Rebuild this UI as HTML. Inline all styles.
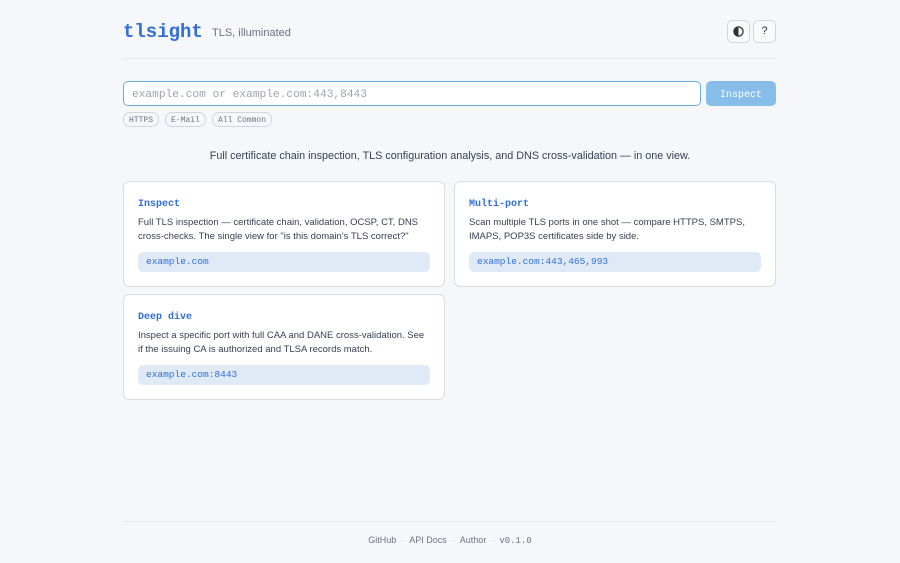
<!DOCTYPE html>
<html><head><meta charset="utf-8"><style>
*{box-sizing:border-box;margin:0;padding:0}
body{width:900px;height:563px;background:#f6f7fa;font-family:"Liberation Sans",sans-serif;color:#374151;position:relative;overflow:hidden}
.mono{font-family:"Liberation Mono",monospace}
.logo{position:absolute;left:123px;top:20px;font:bold 19px "Liberation Mono",monospace;line-height:24px;color:#2f6fd6}
.tag{position:absolute;left:212px;top:27px;font-size:11px;color:#6b7280}
.ib{position:absolute;top:20px;width:23px;height:23px;border:1px solid #d1d5db;border-radius:5px;background:#f8f9fb;font-size:11px;text-align:center;line-height:21px;color:#333}
.ib svg{position:absolute;left:5px;top:5px}
.hr{position:absolute;left:123px;width:653px;height:1px;background:#e5e7eb}
.inp{position:absolute;left:123px;top:81px;width:578px;height:25px;border:1.5px solid #6aaae0;border-radius:5px;background:#fff;font:11.2px "Liberation Mono",monospace;line-height:22px;color:#9ca3af;padding:2px 8px 0}
.btn{position:absolute;left:706px;top:81px;width:70px;height:25px;border-radius:5px;background:#86bde9;color:#fff;font:10px "Liberation Mono",monospace;line-height:25px;text-align:center;padding-top:2px}
.chip{position:absolute;top:112px;height:15px;border:1px solid #d1d5db;border-radius:7px;font:8px "Liberation Mono",monospace;line-height:13px;color:#6b7280;padding:1px 5px 0}
.lead{position:absolute;top:150px;left:0;width:900px;text-align:center;font-size:10.8px;color:#374151}
.card{position:absolute;width:322px;height:106px;background:#fff;border:1px solid #d9dde3;border-radius:6px;padding:0 14px}
.card h3{font:bold 10px "Liberation Mono",monospace;line-height:12px;color:#2f6fd6;margin-top:17px}
.card p{font-size:9.5px;line-height:13.5px;color:#374151;margin-top:5px}
.card .ex{position:absolute;left:14px;right:14px;bottom:14px;height:20px;background:#dfeaf6;border-radius:5px;font:9.5px "Liberation Mono",monospace;line-height:20px;color:#2f6fd6;padding:0 8px}
.foot{position:absolute;top:535px;left:0;width:900px;text-align:center;font-size:9px;color:#6b7280}
.foot span.d{color:#c4c8cf;margin:0 5px}
</style></head><body>
<div class="logo">tlsight</div>
<div class="tag">TLS, illuminated</div>
<div class="ib" style="left:727px"><svg width="11" height="11" viewBox="0 0 12 12"><circle cx="6" cy="6" r="5" fill="none" stroke="#333" stroke-width="1.4"/><path d="M6 1a5 5 0 0 0 0 10z" fill="#333"/></svg></div>
<div class="ib" style="left:753px">?</div>
<div class="hr" style="top:58px"></div>
<div class="inp">example.com or example.com:443,8443</div>
<div class="btn">Inspect</div>
<div class="chip" style="left:123px">HTTPS</div>
<div class="chip" style="left:165px">E-Mail</div>
<div class="chip" style="left:212px">All Common</div>
<div class="lead">Full certificate chain inspection, TLS configuration analysis, and DNS cross-validation — in one view.</div>
<div class="card" style="left:123px;top:181px"><h3>Inspect</h3><p>Full TLS inspection — certificate chain, validation, OCSP, CT, DNS cross-checks. The single view for "is this domain's TLS correct?"</p><div class="ex">example.com</div></div>
<div class="card" style="left:454px;top:181px"><h3>Multi-port</h3><p>Scan multiple TLS ports in one shot — compare HTTPS, SMTPS, IMAPS, POP3S certificates side by side.</p><div class="ex">example.com:443,465,993</div></div>
<div class="card" style="left:123px;top:294px"><h3>Deep dive</h3><p>Inspect a specific port with full CAA and DANE cross-validation. See if the issuing CA is authorized and TLSA records match.</p><div class="ex">example.com:8443</div></div>
<div class="hr" style="top:521px"></div>
<div class="foot">GitHub<span class="d">·</span>API Docs<span class="d">·</span>Author<span class="d">·</span><span class="mono">v0.1.0</span></div>
</body></html>
